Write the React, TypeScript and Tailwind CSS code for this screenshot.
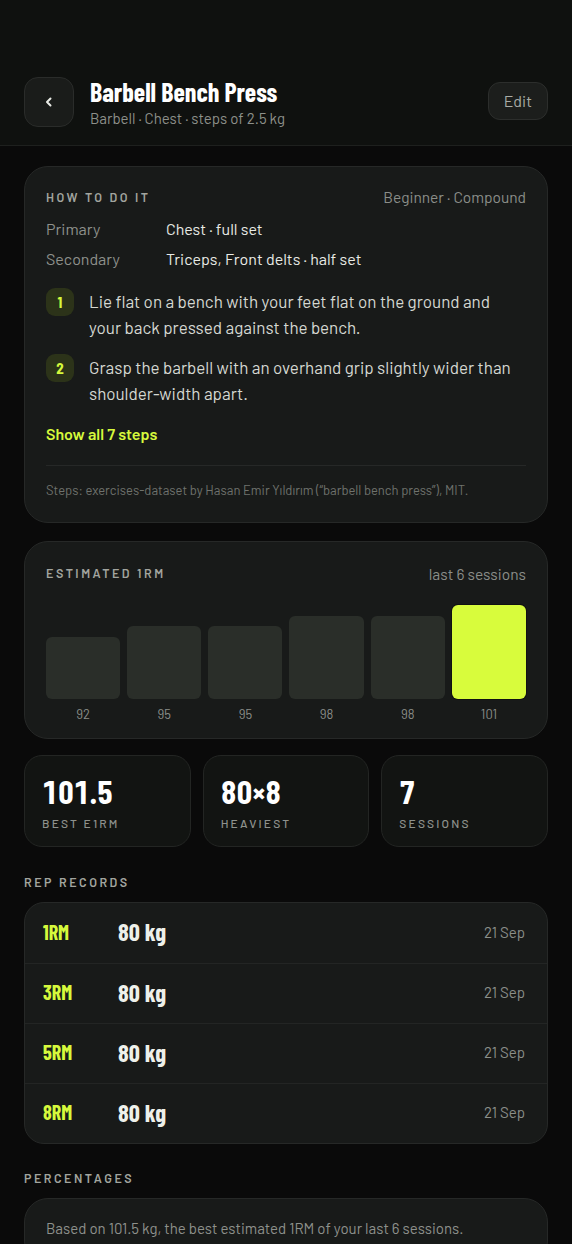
import React from "react";

const body = { fontFamily: '"Barlow", "Roboto", sans-serif' };
const semi = 'font-["Barlow_Semi_Condensed","Barlow",sans-serif]';
const cond = 'font-["Barlow_Condensed","Barlow_Semi_Condensed",sans-serif]';

const bars = [
  { v: 92, h: 62 },
  { v: 95, h: 73 },
  { v: 95, h: 73 },
  { v: 98, h: 83 },
  { v: 98, h: 83 },
  { v: 101, h: 94 },
];

const records = ["1RM", "3RM", "5RM", "8RM"];

const Label = ({ children }: { children: React.ReactNode }) => (
  <p className="text-[12.5px] font-semibold tracking-[0.2em] text-[#a2a59f] uppercase">{children}</p>
);

export default function App() {
  return (
    <div className="min-h-[1244px] bg-[#0a0a0a] text-[#e9ebe6]" style={body}>
      <header className="bg-[#0f110f] border-b border-[#1e201e] pt-[77px] pb-[18px] px-6 flex items-center">
        <button className="w-[50px] h-[50px] rounded-[14px] bg-[#1a1c1a] border border-[#2a2c2a] flex items-center justify-center text-[#e9ebe6]">
          <svg width="10" height="12" viewBox="0 0 10 12" fill="none">
            <path d="M6.5 2.5 3 6l3.5 3.5" stroke="currentColor" strokeWidth="2" strokeLinecap="round" strokeLinejoin="round" />
          </svg>
        </button>
        <div className="ml-4 flex-1">
          <h1 className={`${cond} text-[26px] leading-[30px] font-bold text-white`}>Barbell Bench Press</h1>
          <p className="text-[15px] leading-[18px] text-[#8d908a] mt-[2px]">Barbell · Chest · steps of 2.5 kg</p>
        </div>
        <button className="h-[38px] px-[15px] rounded-[12px] bg-[#1c1e1c] border border-[#2c2e2c] text-[16px] text-[#a9aca6] -mt-[2px]">
          Edit
        </button>
      </header>

      <main className="px-6 pt-5">
        <section className="rounded-[24px] bg-[#181a19] border border-[#262827] px-[21px] pt-[21px] pb-[21px]">
          <div className="flex items-center justify-between h-[18px]">
            <Label>How to do it</Label>
            <p className="text-[15.5px] text-[#8b8e89]">Beginner · Compound</p>
          </div>
          <div className="mt-[8px] text-[16px] leading-[30px]">
            <div className="flex">
              <span className="w-[120px] text-[#8e918c]">Primary</span>
              <span className="text-[#e9ebe6]">Chest · full set</span>
            </div>
            <div className="flex">
              <span className="w-[120px] text-[#8e918c]">Secondary</span>
              <span className="text-[#e9ebe6]">Triceps, Front delts · half set</span>
            </div>
          </div>
          <ol className="mt-[14px] flex flex-col gap-[14px]">
            {[
              "Lie flat on a bench with your feet flat on the ground and your back pressed against the bench.",
              "Grasp the barbell with an overhand grip slightly wider than shoulder-width apart.",
            ].map((t, i) => (
              <li key={i} className="flex items-start gap-[15px]">
                <span className={`${semi} shrink-0 w-[28px] h-[28px] rounded-[9px] bg-[#2c3319] text-[#d6f93c] text-[15px] font-bold flex items-center justify-center`}>
                  {i + 1}
                </span>
                <p className="text-[17px] leading-[26px] text-[#d5d8d2] pr-2">{t}</p>
              </li>
            ))}
          </ol>
          <p className="mt-[16px] text-[16px] font-semibold text-[#d6f93c]">Show all 7 steps</p>
          <div className="mt-[19px] border-t border-[#262827]" />
          <p className="mt-[15px] text-[13px] text-[#6f726d]">
            Steps: exercises-dataset by Hasan Emir Yıldırım (“barbell bench press”), MIT.
          </p>
        </section>

        <section className="mt-[18px] rounded-[24px] bg-[#181a19] border border-[#262827] px-[21px] pt-[23px] pb-[15px]">
          <div className="flex items-center justify-between h-[18px]">
            <Label>Estimated 1RM</Label>
            <p className="text-[15.5px] text-[#8b8e89]">last 6 sessions</p>
          </div>
          <div className="mt-[21px] grid grid-cols-6 gap-[7px]">
            {bars.map((b, i) => (
              <div key={i} className="flex flex-col items-center">
                <div className="h-[95px] w-full flex items-end">
                  <div
                    className={`w-full rounded-[6px] ${i === 5 ? "bg-[#d8fc3c] ring-1 ring-[#111]" : "bg-[#2a2e29]"}`}
                    style={{ height: b.h }}
                  />
                </div>
                <span className="mt-[6px] text-[13px] leading-[18px] text-[#8b8e89]">{b.v}</span>
              </div>
            ))}
          </div>
        </section>

        <section className="mt-[16px] grid grid-cols-3 gap-3">
          {[
            ["101.5", "Best e1RM"],
            ["80×8", "Heaviest"],
            ["7", "Sessions"],
          ].map(([v, l]) => (
            <div key={l} className="h-[92px] rounded-[18px] bg-[#121412] border border-[#232523] px-[17px] pt-[18px]">
              <p className={`${cond} text-[32px] leading-[34px] font-bold tabular-nums text-white`}>{v}</p>
              <p className="mt-[6px] text-[12px] font-medium tracking-[0.18em] text-[#8e918c] uppercase">{l}</p>
            </div>
          ))}
        </section>

        <div className="mt-[26px] mb-[11px]">
          <Label>Rep records</Label>
        </div>
        <section className="rounded-[20px] bg-[#181a19] border border-[#262827] overflow-hidden">
          {records.map((r, i) => (
            <div
              key={r}
              className={`h-[60px] flex items-center px-[18px] pb-[3px] ${i > 0 ? "border-t border-[#232524]" : ""}`}
            >
              <span className={`${cond} w-[75px] text-[20px] font-bold text-[#d6f93c]`}>{r}</span>
              <span className={`${cond} flex-1 text-[24.5px] font-bold text-[#eef0ea]`}>80 kg</span>
              <span className="text-[15px] text-[#8b8e89] mr-[4px]">21 Sep</span>
            </div>
          ))}
        </section>

        <div className="mt-[25px] mb-[10px]">
          <Label>Percentages</Label>
        </div>
        <section className="rounded-[24px] bg-[#181a19] border border-[#262827] px-[21px] pt-[18px] pb-6">
          <p className="text-[15px] text-[#8e918c]">
            Based on 101.5 kg, the best estimated 1RM of your last 6 sessions.
          </p>
        </section>
      </main>
    </div>
  );
}
